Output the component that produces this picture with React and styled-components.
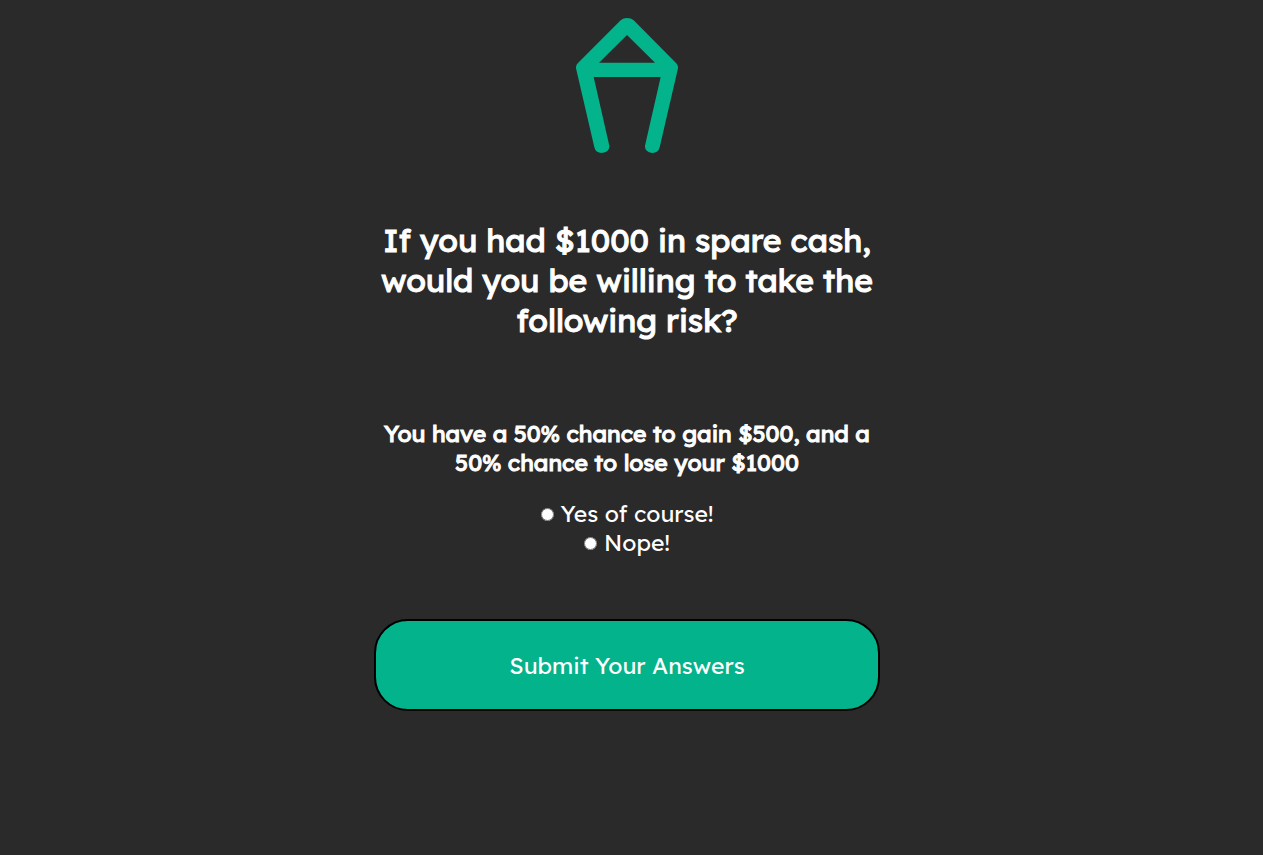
import React from "react";
import styled, { createGlobalStyle } from "styled-components";

const GlobalStyle = createGlobalStyle`
  *, *::before, *::after { box-sizing: border-box; }
  body {
    margin: 0;
    background: #2a2a2a;
    color: #ffffff;
    font-family: Lexend, "Lexend Deca", Inter, "Liberation Sans", sans-serif;
  }
`;

const Page = styled.main`
  display: flex;
  flex-direction: column;
  align-items: center;
  padding: 18px 9px 24px 0;
  text-align: center;
`;

const Logo = styled.svg`
  display: block;
  width: 102px;
  height: 135px;
  fill: #03b38c;
`;

const Form = styled.form`
  display: flex;
  flex-direction: column;
  width: 506px;
  max-width: 100%;
  margin-top: 67px;
`;

const Title = styled.h1`
  margin: 0;
  font-size: 32px;
  font-weight: 400;
  line-height: 40px;
  -webkit-text-stroke: 1px currentColor;
`;

const Choices = styled.fieldset`
  min-width: 0;
  margin: 79px 0 0;
  padding: 0;
  border: 0;
`;

const Question = styled.legend`
  width: 100%;
  padding: 0 0 22px;
  font-size: 23px;
  font-weight: 400;
  line-height: 29px;
  -webkit-text-stroke: 1px currentColor;
`;

const Choice = styled.label`
  display: flex;
  justify-content: center;
  align-items: center;
  gap: 7px;
  font-size: 23px;
  line-height: 29px;
`;

const Radio = styled.input`
  width: 13px;
  height: 13px;
  margin: 2px 0 0;
`;

const Submit = styled.button`
  width: 100%;
  margin-top: 62px;
  padding: 30px 24px 28px;
  border: 2px solid #000000;
  border-radius: 34px;
  background: #03b38c;
  color: #ffffff;
  font-family: inherit;
  font-size: 23px;
  line-height: 30px;
  cursor: pointer;
`;

const choices = [
  { value: "yes", label: "Yes of course!" },
  { value: "no", label: "Nope!" },
];

export default function App() {
  return (
    <>
      <GlobalStyle />
      <Page>
        <Logo viewBox="48 39 306 405" aria-hidden="true">
          <path
            fillRule="evenodd"
            d="M182 46Q190 39 201 39Q213 39 221 46L348 174Q355 181 354 190L299 427Q295 444 277 444Q253 441 255 422L302 216H101L148 422Q149 441 125 444Q107 444 103 427L48 190Q47 181 54 174ZM201 90L117 173H285Z"
          />
        </Logo>
        <Form onSubmit={(event) => event.preventDefault()}>
          <Title>
            If you had $1000 in spare cash, would you be willing to take the
            following risk?
          </Title>
          <Choices>
            <Question>
              You have a 50% chance to gain $500, and a 50% chance to lose your
              $1000
            </Question>
            {choices.map(({ value, label }) => (
              <Choice key={value}>
                <Radio type="radio" name="risk" value={value} />
                {label}
              </Choice>
            ))}
          </Choices>
          <Submit type="submit">Submit Your Answers</Submit>
        </Form>
      </Page>
    </>
  );
}
